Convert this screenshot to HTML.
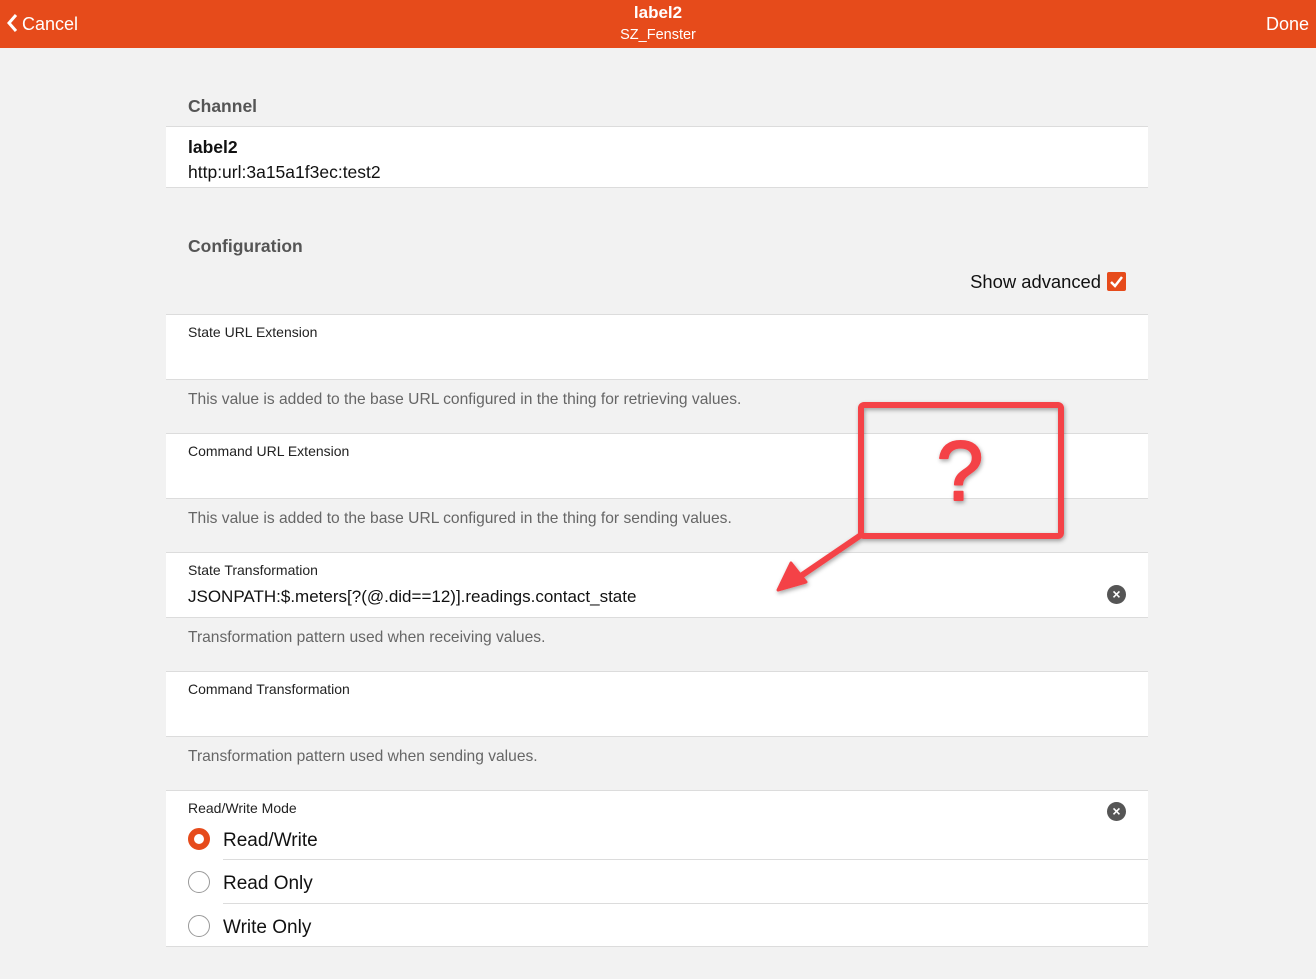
<!DOCTYPE html>
<html><head><meta charset="utf-8"><style>
*{margin:0;padding:0;box-sizing:border-box}
body{width:1316px;height:979px;background:#f2f2f2;font-family:"Liberation Sans",sans-serif;position:relative;overflow:hidden;color:#111}
.hdr{position:absolute;left:0;top:0;width:1316px;height:48px;background:#e64b1b;color:#fff}
.t{position:absolute;white-space:nowrap;line-height:20px}
.blk{position:absolute;left:166px;width:982px;background:#fff;border-top:1px solid #dcdcdc;border-bottom:1px solid #dcdcdc}
.sec{font-size:17.5px;font-weight:bold;color:#555}
.lbl{font-size:14px;color:#222}
.help{font-size:15.6px;color:#666}
.clr{position:absolute;width:19px;height:19px;border-radius:50%;background:#555;color:#fff;font-size:14px;line-height:19px;text-align:center;font-weight:bold}
.rad{position:absolute;left:188px;width:22px;height:22px;border-radius:50%;border:1.5px solid #999;background:#fff}
.opt{font-size:19px;left:223px}
</style></head><body>
<div class="hdr">
 <svg style="position:absolute;left:6px;top:13px" width="12" height="20" viewBox="0 0 12 20"><path d="M10 2 L3 10 L10 18" stroke="#fff" stroke-width="3" fill="none"/></svg>
 <div class="t" style="left:22px;top:14px;font-size:18px">Cancel</div>
 <div class="t" style="left:0;width:1316px;text-align:center;top:3px;font-size:17px;font-weight:bold">label2</div>
 <div class="t" style="left:0;width:1316px;text-align:center;top:25px;font-size:14.5px">SZ_Fenster</div>
 <div class="t" style="right:7px;top:14px;font-size:18px">Done</div>
</div>

<div class="t sec" style="left:188px;top:96px">Channel</div>
<div class="blk" style="top:126px;height:62px"></div>
<div class="t" style="left:188px;top:137px;font-size:17.5px;font-weight:bold">label2</div>
<div class="t" style="left:188px;top:162px;font-size:17.5px">http:url:3a15a1f3ec:test2</div>

<div class="t sec" style="left:188px;top:236px">Configuration</div>
<div class="t" style="right:215px;top:272px;font-size:18.4px">Show advanced</div>
<div style="position:absolute;left:1107px;top:272px;width:19px;height:19px;background:#e64b1b;border-radius:2px"><svg width="19" height="19"><path d="M4 10 L8 14 L15 5" stroke="#fff" stroke-width="2.5" fill="none"/></svg></div>

<div class="blk" style="top:314px;height:66px"></div>
<div class="t lbl" style="left:188px;top:322px">State URL Extension</div>
<div class="t help" style="left:188px;top:390px">This value is added to the base URL configured in the thing for retrieving values.</div>

<div class="blk" style="top:433px;height:66px"></div>
<div class="t lbl" style="left:188px;top:441px">Command URL Extension</div>
<div class="t help" style="left:188px;top:509px">This value is added to the base URL configured in the thing for sending values.</div>

<div class="blk" style="top:552px;height:66px"></div>
<div class="t lbl" style="left:188px;top:560px">State Transformation</div>
<div class="t" style="left:188px;top:587px;font-size:17px">JSONPATH:$.meters[?(@.did==12)].readings.contact_state</div>
<div class="clr" style="left:1107px;top:585px">×</div>
<div class="t help" style="left:188px;top:628px">Transformation pattern used when receiving values.</div>

<div class="blk" style="top:671px;height:66px"></div>
<div class="t lbl" style="left:188px;top:679px">Command Transformation</div>
<div class="t help" style="left:188px;top:747px">Transformation pattern used when sending values.</div>

<div class="blk" style="top:790px;height:157px"></div>
<div class="t lbl" style="left:188px;top:798px">Read/Write Mode</div>
<div class="clr" style="left:1107px;top:802px">×</div>
<div class="rad" style="top:828px;border:6px solid #e64b1b"></div>
<div class="t opt" style="top:831px">Read/Write</div>
<div style="position:absolute;left:223px;top:859px;width:925px;height:1px;background:#dcdcdc"></div>
<div class="rad" style="top:871px"></div>
<div class="t opt" style="top:874px">Read Only</div>
<div style="position:absolute;left:223px;top:903px;width:925px;height:1px;background:#dcdcdc"></div>
<div class="rad" style="top:915px"></div>
<div class="t opt" style="top:918px">Write Only</div>

<svg style="position:absolute;left:0;top:0" width="1316" height="979">
 <defs><filter id="sh"><feDropShadow dx="1" dy="2" stdDeviation="2" flood-opacity="0.35"/></filter></defs>
 <g filter="url(#sh)" stroke="#f44246" fill="none" stroke-width="6" stroke-linejoin="round">
  <rect x="861" y="405" width="200" height="131" rx="3"/>
  <path d="M861 535 L795 580" stroke-linecap="round"/>
  <path d="M778 590 L791 563 L806 582 Z" fill="#f44246" stroke-width="3"/>
  <text x="960" y="500" font-family="Liberation Sans,sans-serif" font-size="84" fill="#f44246" stroke="#f44246" stroke-width="2" text-anchor="middle">?</text>
 </g>
</svg>
</body></html>
